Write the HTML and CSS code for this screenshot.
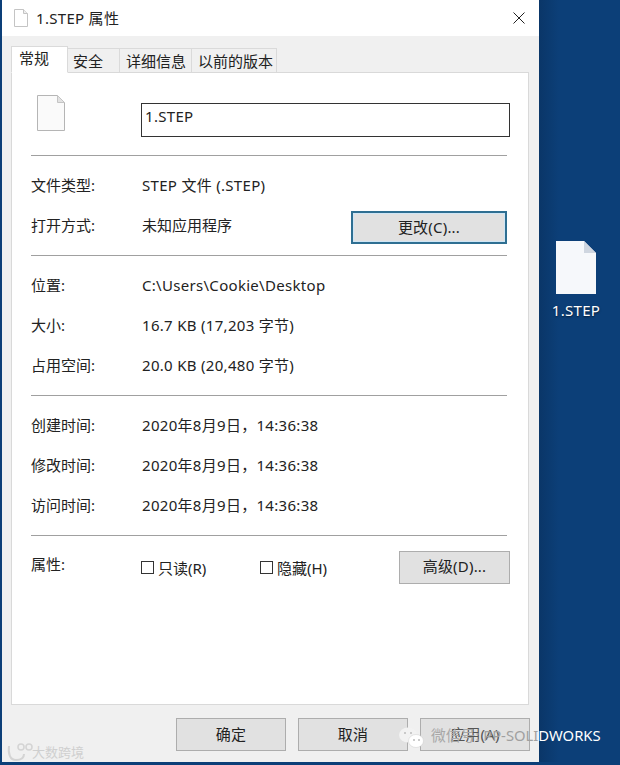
FILE: index.html
```html
<!DOCTYPE html>
<html lang="zh">
<head>
<meta charset="utf-8">
<title>1.STEP 属性</title>
<link rel="stylesheet" href="styles.css">
</head>
<body>
<div class="screen">
  <div class="dialog">
    <div class="titlebar">
      <svg class="title-icon" width="14" height="18" viewBox="0 0 14 18"><path d="M.5.500h9l4 4v13H.5z" fill="#fff" stroke="#c4c4c4"/><path d="M9.500.5v4h4" fill="#eee" stroke="#c4c4c4"/></svg>
      <span class="title-text">1.STEP 属性</span>
      <svg class="close" width="12" height="12" viewBox="0 0 12 12"><path d="M.5.500l11 11M11.500.500l-11 11" stroke="#222" stroke-width="1" fill="none"/></svg>
    </div>
    <div class="client">
      <div class="tabs">
        <div class="tab tab-active">常规</div>
        <div class="tab tab-security">安全</div>
        <div class="tab tab-details">详细信息</div>
        <div class="tab tab-previous">以前的版本</div>
      </div>
      <div class="panel">
        <div class="name-row">
          <svg class="file-icon" width="28" height="36" viewBox="0 0 28 36"><path d="M.5.500h20l7 7v28H.5z" fill="#fafafa" stroke="#b5b5b5"/><path d="M20.500.5v7h7z" fill="#e2e2e2" stroke="#c4c4c4"/></svg>
          <div class="name-box">1.STEP</div>
        </div>
        <div class="sep sep-first"></div>
        <div class="row"><span class="label">文件类型:</span><span class="value">STEP 文件 (.STEP)</span></div>
        <div class="row"><span class="label">打开方式:</span><span class="value value-cjk">未知应用程序</span><button class="btn btn-focus">更改(C)...</button></div>
        <div class="sep"></div>
        <div class="row"><span class="label">位置:</span><span class="value value-latin">C:\Users\Cookie\Desktop</span></div>
        <div class="row"><span class="label">大小:</span><span class="value">16.7 KB (17,203 字节)</span></div>
        <div class="row"><span class="label">占用空间:</span><span class="value">20.0 KB (20,480 字节)</span></div>
        <div class="sep"></div>
        <div class="row"><span class="label">创建时间:</span><span class="value">2020年8月9日，14:36:38</span></div>
        <div class="row"><span class="label">修改时间:</span><span class="value">2020年8月9日，14:36:38</span></div>
        <div class="row"><span class="label">访问时间:</span><span class="value">2020年8月9日，14:36:38</span></div>
        <div class="sep"></div>
        <div class="row attr-row">
          <span class="label">属性:</span>
          <span class="value value-cjk checks">
            <span class="check check-ro"><i class="box"></i>只读(R)</span>
            <span class="check"><i class="box"></i>隐藏(H)</span>
          </span>
          <button class="btn btn-adv">高级(D)...</button>
        </div>
      </div>
      <div class="footer">
        <button class="btn btn-foot">确定</button>
        <button class="btn btn-foot">取消</button>
        <button class="btn btn-foot">应用(A)</button>
      </div>
    </div>
  </div>
  <div class="desktop">
    <svg width="40" height="53" viewBox="0 0 40 53"><path d="M0 0h28l12 12v41H0z" fill="#f6f8fb"/><path d="M28 0v12h12z" fill="#cfd6e0"/></svg>
    <span class="desk-label">1.STEP</span>
  </div>
</div>
<div class="wm wm-left">大数跨境</div>
<svg class="wm-logo" width="28" height="20" viewBox="0 0 28 20"><path d="M3 3c-1 8 1 14 7 14s8-3 8-6" fill="none" stroke="#d4d4d4" stroke-width="2"/><circle cx="15" cy="4" r="3" fill="none" stroke="#d4d4d4" stroke-width="1.500"/><circle cx="23" cy="4" r="3" fill="none" stroke="#d4d4d4" stroke-width="1.500"/></svg>
<svg class="wm-wechat" width="26" height="22" viewBox="0 0 26 22"><ellipse cx="10" cy="8" rx="9" ry="7.500" fill="#f2f2f2"/><ellipse cx="18" cy="14" rx="7.500" ry="6.500" fill="#fff" stroke="#ccc" stroke-width=".5"/><circle cx="7" cy="6" r="1" fill="#bbb"/><circle cx="13" cy="6" r="1" fill="#bbb"/><circle cx="16" cy="13" r="1" fill="#bbb"/><circle cx="21" cy="13" r="1" fill="#bbb"/></svg>
<div class="wm wm-right"><span class="wm-grey">微信号: </span><span class="wm-mid">PP-SOLI</span>DWORKS</div>
</body>
</html>
```
FILE: styles.css
```css
* { box-sizing: border-box; }
html, body { margin: 0; padding: 0; }
body {
  width: 620px;
  height: 765px;
  overflow: hidden;
  position: relative;
  font-family: "Noto Sans", "Noto Sans CJK SC", sans-serif;
  font-size: 15px;
  color: #222;
}
.screen {
  display: flex;
  width: 620px;
  height: 765px;
  padding-left: 2px;
  background: #0c3f78;
  align-items: flex-start;
}
.dialog {
  width: 537px;
  height: 762px;
  flex: none;
  background: #f0f0f0;
  display: flex;
  flex-direction: column;
}
.titlebar {
  height: 36px;
  flex: none;
  background: #fff;
  display: flex;
  align-items: center;
  padding: 0 14px 0 12px;
}
.title-icon { flex: none; }
.title-text { margin-left: 8px; font-size: 15px; letter-spacing: .3px; margin-top: -1px; flex: 1; }
.close { flex: none; margin-top: -1px; }
.client {
  flex: 1;
  padding: 11px 10px 0 9px;
  display: flex;
  flex-direction: column;
}
.tabs {
  display: flex;
  align-items: flex-end;
  height: 26px;
  flex: none;
  position: relative;
  z-index: 1;
  margin-bottom: -1px;
}
.tab {
  height: 25px;
  background: #f0f0f0;
  border: 1px solid #dadada;
  border-bottom: 1px solid #d9d9d9;
  border-left: 0;
  font-size: 15px;
  line-height: 24px;
  white-space: nowrap;
}
.tab-active {
  width: 57px;
  height: 27px;
  background: #fff;
  border-left: 1px solid #dadada;
  border-bottom: 1px solid #fff;
  line-height: 23px;
  padding-left: 7px;
}
.tab-security { width: 52px; padding-left: 5px; }
.tab-details { width: 72px; padding-left: 6px; }
.tab-previous { width: 85px; padding-left: 6px; }
.panel {
  height: 633px;
  flex: none;
  background: #fff;
  border: 1px solid #d9d9d9;
  padding: 0 20px 0 19px;
}
.name-row {
  height: 82px;
  display: flex;
  align-items: flex-start;
}
.file-icon { margin: 22px 0 0 6px; flex: none; }
.name-box {
  margin: 30px 0 0 76px;
  width: 369px;
  height: 34px;
  border: 1px solid #333;
  padding: 2px 3px;
  line-height: 20px;
  font-size: 15px;
  letter-spacing: .3px;
  flex: none;
}
.sep {
  height: 1px;
  background: #a0a0a0;
  width: 476px;
  margin-top: 10px;
}
.sep-first { margin-top: 0; }
.sep + .row { margin-top: 9px; }
.row {
  height: 40px;
  display: flex;
  align-items: center;
}
.label { width: 111px; flex: none; font-size: 15px; margin-top: -2px; }
.value { flex: 1; font-size: 15px; letter-spacing: .3px; white-space: nowrap; margin-top: -2px; }
.value-cjk { letter-spacing: 0; }
.value-latin { margin-top: 0; }
.btn {
  font: inherit;
  font-size: 15px;
  letter-spacing: .2px;
  color: #222;
  background: #e1e1e1;
  border: 1px solid #adadad;
  padding: 0 0 3px;
  height: 33px;
  flex: none;
}
.btn-focus {
  width: 156px;
  border: 2px solid #2f6f92;
  box-shadow: inset 0 0 0 1px #cfe6f5;
  margin: 5px 1px 0 0;
}
.attr-row .label { margin-top: -4px; }
.checks { display: flex; margin: 4px 0 0 -1px; }
.check { display: flex; align-items: center; gap: 4px; }
.check-ro { width: 119px; }
.box {
  width: 13px;
  height: 13px;
  border: 1px solid #333;
  background: #fff;
  display: block;
}
.btn-adv { width: 111px; margin: 4px -2px 0 0; }
.footer {
  display: flex;
  gap: 12px;
  padding: 13px 0 0 165px;
}
.btn-foot { width: 110px; flex: none; }
.footer .btn-foot:last-child { color: #555; }
.desktop {
  flex: 1;
  display: flex;
  flex-direction: column;
  align-items: center;
  padding-top: 241px;
  padding-right: 7px;
  background: linear-gradient(90deg, #0a3668 0, #0c3f78 20px);
  height: 762px;
}
.desk-label {
  color: #fff;
  font-size: 15px;
  letter-spacing: .3px;
  margin-top: 6px;
  line-height: 20px;
  text-shadow: 0 1px 2px rgba(0,0,0,.6);
}
.wm { position: absolute; white-space: nowrap; }
.wm-left { left: 32px; top: 743px; font-size: 13px; color: #cfcfcf; line-height: 18px; }
.wm-logo { position: absolute; left: 6px; top: 743px; }
.wm-wechat { position: absolute; left: 398px; top: 727px; }
.wm-right { left: 431px; top: 725px; font-size: 14.800px; line-height: 20px; color: #fff; }
.wm-grey { color: #a8a8a8; }
.wm-mid { color: #a0a0a0; }
```
